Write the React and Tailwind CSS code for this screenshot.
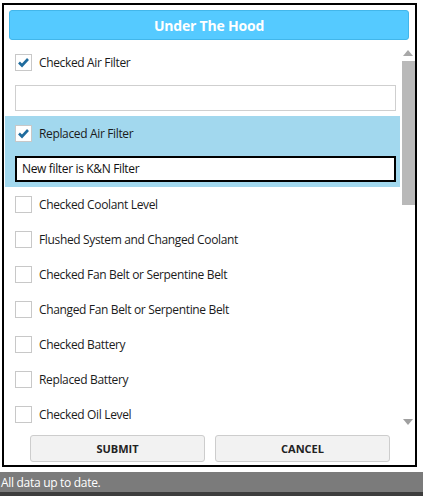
import React from 'react';

const font = { fontFamily: '"Open Sans", "Noto Sans", sans-serif' };

const items = [
  { label: 'Checked Air Filter', checked: true, note: '', open: true },
  { label: 'Replaced Air Filter', checked: true, note: 'New filter is K&N Filter', open: true, active: true },
  { label: 'Checked Coolant Level' },
  { label: 'Flushed System and Changed Coolant' },
  { label: 'Checked Fan Belt or Serpentine Belt' },
  { label: 'Changed Fan Belt or Serpentine Belt' },
  { label: 'Checked Battery' },
  { label: 'Replaced Battery' },
  { label: 'Checked Oil Level' },
];

const CheckBox = ({ checked }) => (
  <div className="w-[17px] h-[17px] shrink-0 border border-[#c8c8c8] bg-white flex items-center justify-center">
    {checked && (
      <svg width="13" height="13" viewBox="0 0 13 13">
        <polyline
          points="2,6.5 5,9.5 11,3"
          fill="none"
          stroke="#1f6c9e"
          strokeWidth="2.6"
        />
      </svg>
    )}
  </div>
);

const Row = ({ item }) => (
  <div
    className={`px-[10px] pt-[9px] ${item.open ? 'pb-[5px]' : 'pb-[9px]'} ${
      item.active ? 'bg-[#a2d8ee]' : ''
    }`}
  >
    <div className="flex items-center gap-[7px] h-[17px]">
      <CheckBox checked={item.checked} />
      <span className="text-[12px] text-[#1b1b1b] tracking-[-0.35px]">{item.label}</span>
    </div>
    {item.open && (
      <div
        className={`mt-[14px] h-[26px] w-[381px] bg-white flex items-center px-[5px] text-[12px] text-[#111] tracking-[-0.35px] ${
          item.active ? 'border-2 border-black' : 'border border-[#cfcfcf]'
        }`}
      >
        {item.note}
      </div>
    )}
  </div>
);

const ActionButton = ({ title }) => (
  <div className="w-[175px] h-[27px] rounded-[3px] bg-[#f2f2f2] border border-[#cdcdcd] flex items-center justify-center pt-[1px] text-[11px] font-bold text-[#222]">
    {title}
  </div>
);

const App = () => {
  return (
    <div className="w-[423px] h-[496px] bg-white flex flex-col overflow-hidden" style={font}>
      <div className="ml-[2px] mt-[3px] w-[415px] h-[464px] shrink-0 border-2 border-black flex flex-col">
        <div className="mx-[5px] mt-[5px] h-[30px] w-[400px] rounded-[3px] bg-[#55caff] border border-[#42b6ea] flex items-center justify-center">
          <span className="text-white font-bold text-[14px] tracking-[-0.2px]">Under The Hood</span>
        </div>
        <div className="flex mt-[5px] h-[385px]">
          <div className="w-[396px] ml-[1px] overflow-hidden">
            {items.map(item => (
              <Row key={item.label} item={item} />
            ))}
          </div>
          <div className="w-[14px] ml-[1px] flex flex-col items-center">
            <svg width="10" height="6" viewBox="0 0 10 6" className="mt-[5px]">
              <polygon points="0,6 5,0 10,6" fill="#a8a8a8" />
            </svg>
            <div className="mt-[5px] w-[13px] h-[144px] bg-[#b9b9b9]" />
            <div className="flex-1" />
            <svg width="10" height="6" viewBox="0 0 10 6" className="mb-[5px]">
              <polygon points="0,0 10,0 5,6" fill="#a0a0a0" />
            </svg>
          </div>
        </div>
        <div className="flex gap-[10px] pl-[26px] mt-[5px]">
          <ActionButton title="SUBMIT" />
          <ActionButton title="CANCEL" />
        </div>
      </div>
      <div className="mt-[5px] h-[20px] shrink-0 bg-[#7b7b7b] flex items-center pl-[1px] pt-[1px]">
        <span className="text-white text-[12px] tracking-[-0.3px]">All data up to date.</span>
      </div>
      <div className="flex-1 bg-[#3d3d3d]" />
    </div>
  );
};

export default App;
